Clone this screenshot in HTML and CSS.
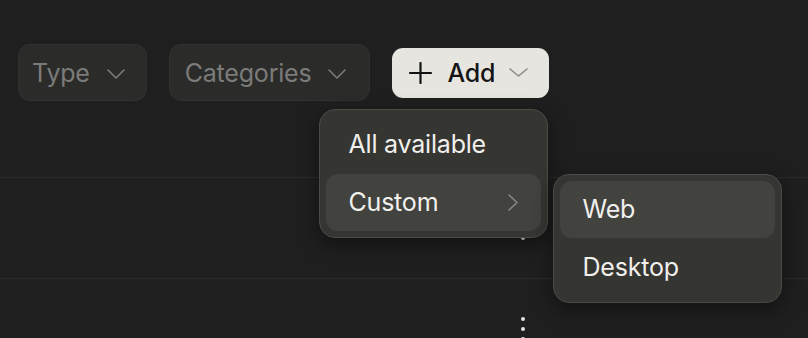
FILE: index.html
```html
<!DOCTYPE html>
<html>
<head>
<meta charset="utf-8">
<link rel="stylesheet" href="styles.css">
</head>
<body>
<div class="page">
  <div class="toolbar">
    <button class="filter filter-type">
      <span>Type</span>
      <svg class="chev-down" width="18" height="10" viewBox="0 0 18 10"><path d="M1 1 L9 9 L17 1" fill="none" stroke="currentColor" stroke-width="1.6" stroke-linecap="round" stroke-linejoin="round"/></svg>
    </button>
    <button class="filter">
      <span>Categories</span>
      <svg class="chev-down" width="18" height="10" viewBox="0 0 18 10"><path d="M1 1 L9 9 L17 1" fill="none" stroke="currentColor" stroke-width="1.6" stroke-linecap="round" stroke-linejoin="round"/></svg>
    </button>
    <div class="add-wrap">
      <button class="add">
        <svg class="plus" width="23" height="22" viewBox="0 0 23 22"><path d="M11.5 1 V21 M1 11 H22" fill="none" stroke="currentColor" stroke-width="2.2" stroke-linecap="round"/></svg>
        <span>Add</span>
        <svg class="chev-down add-chev" width="19" height="9" viewBox="0 0 19 9"><path d="M1 1 L9.5 8 L18 1" fill="none" stroke="currentColor" stroke-width="1.6" stroke-linecap="round" stroke-linejoin="round"/></svg>
      </button>
      <div class="menu menu-main">
        <div class="item">All available</div>
        <div class="item active">
          <span>Custom</span>
          <svg width="10" height="17" viewBox="0 0 10 17"><path d="M1 1 L9 8.5 L1 16" fill="none" stroke="currentColor" stroke-width="1.5" stroke-linecap="round" stroke-linejoin="round"/></svg>
        </div>
        <div class="menu menu-sub">
          <div class="item active">Web</div>
          <div class="item">Desktop</div>
        </div>
      </div>
    </div>
  </div>
  <div class="table">
    <div class="row"><span class="more"><i></i><i></i><i></i></span></div>
    <div class="row"><span class="more"><i></i><i></i><i></i></span></div>
  </div>
</div>
</body>
</html>
```
FILE: styles.css
```css
* { box-sizing: border-box; }
html, body { margin: 0; height: 100%; }
body {
  background: #1f1f1f;
  font-family: Inter, "Noto Sans", sans-serif;
  overflow: hidden;
}
.page { padding-top: 44px; }
.toolbar {
  display: flex;
  align-items: center;
  gap: 22px;
  padding-left: 18px;
  height: 57px;
}
button {
  font-family: inherit;
  border: none;
  cursor: pointer;
}
.filter {
  height: 57px;
  display: flex;
  align-items: center;
  gap: 17px;
  padding: 0 23px 0 15px;
  background: #2b2b2a;
  border: 1px solid #313130;
  border-radius: 12px;
  color: #7b7b79;
  font-size: 25px;
  letter-spacing: -0.2px;
}
.filter-type { padding: 0 21px 0 13px; }
.filter .chev-down { margin-top: 2px; }
.add-wrap { position: relative; }
.add {
  height: 50px;
  display: flex;
  align-items: center;
  padding: 0 21px 0 17px;
  background: #e6e5e0;
  border-radius: 11px;
  color: #141414;
  font-size: 25px;
  font-weight: 500;
  letter-spacing: -0.2px;
}
.add .plus { margin-right: 15px; }
.add .add-chev { margin-left: 14px; color: #8a8a87; }
.menu {
  position: absolute;
  width: 229px;
  padding: 6px;
  display: flex;
  flex-direction: column;
  gap: 1px;
  background: #353532;
  border: 1px solid #4a4a47;
  border-radius: 16px;
  box-shadow: 0 6px 20px rgba(0, 0, 0, 0.45);
}
.menu-main { left: -73px; top: 61px; }
.menu-sub { left: 233px; top: 64px; }
.item {
  height: 57px;
  display: flex;
  align-items: center;
  justify-content: space-between;
  padding: 0 23px 0 22px;
  border-radius: 12px;
  color: #f1f0ec;
  font-size: 25px;
  letter-spacing: -0.2px;
}
.item.active { background: #42423f; }
.item svg { color: #8a8a87; }
.table { margin-top: 76px; }
.row {
  height: 101px;
  border-top: 1px solid #2b2b2b;
  display: flex;
  align-items: center;
  justify-content: flex-end;
  padding-right: 283px;
}
.more {
  display: flex;
  flex-direction: column;
  gap: 6px;
}
.more i {
  display: block;
  width: 4px;
  height: 4px;
  border-radius: 50%;
  background: #e2e2e0;
}
```
